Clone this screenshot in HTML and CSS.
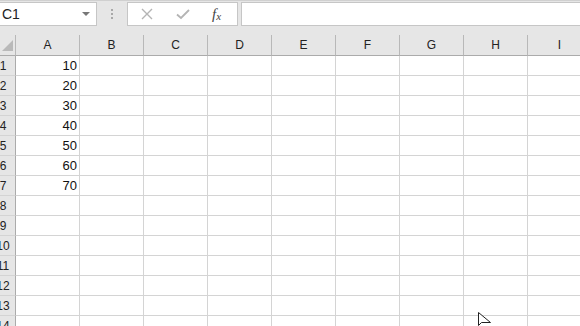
FILE: index.html
```html
<!DOCTYPE html>
<html lang="en">
<head>
  <meta charset="UTF-8" />
  <title>Sheet1</title>
  <link rel="stylesheet" href="styles.css">
</head>
<body>
  <div class="toolbar">
    <div class="namebox">
      <span class="ref">C1</span>
      <span class="drop"></span>
    </div>
    <div class="grip"><i></i><i></i><i></i></div>
    <div class="fbtns">
      <svg class="ico" width="12" height="12" viewBox="0 0 12 12"><path d="M1 1 L11 11 M11 1 L1 11" stroke="#b4b4b4" stroke-width="1.4" fill="none"/></svg>
      <svg class="ico" width="14" height="12" viewBox="0 0 14 12"><path d="M1 6.5 L5 10 L13 2" stroke="#b4b4b4" stroke-width="1.8" fill="none"/></svg>
      <span class="fx">f<sub>x</sub></span>
    </div>
    <div class="formula"></div>
  </div>

  <div class="sheet" id="sheet"></div>

  <svg class="cursor" width="14" height="16" viewBox="0 0 14 16"><path d="M0.5 0.5 L0.5 13.5 L3.5 10.5 L12.5 10.5 Z" fill="#fff" stroke="#222" stroke-width="1"/></svg>

  <script>
    const cols = ['A', 'B', 'C', 'D', 'E', 'F', 'G', 'H', 'I'];
    const sheet = document.getElementById('sheet');

    let html = '<div class="corner"><span class="tri"></span></div>';
    cols.forEach(c => { html += `<div class="colhead">${c}</div>`; });

    for (let r = 1; r <= 14; r++) {
      html += `<div class="rowhead"><span>${r}</span></div>`;
      cols.forEach((c, i) => {
        const val = (i === 0 && r <= 7) ? r * 10 : '';
        html += `<div class="cell">${val}</div>`;
      });
    }
    sheet.innerHTML = html;
  </script>
</body>
</html>
```

FILE: styles.css
```css
body {
  margin: 0;
  overflow: hidden;
  width: 580px;
  height: 326px;
  background: #fff;
  font-family: "Liberation Sans", Arial, sans-serif;
}

.toolbar {
  height: 35px;
  box-sizing: border-box;
  padding-top: 1px;
  background: #e6e6e6;
  border-top: 1px solid #d0d0d0;
  display: flex;
  align-items: flex-start;
}

.namebox {
  width: 97px;
  height: 24px;
  box-sizing: border-box;
  background: #fff;
  border: 1px solid #c6c6c6;
  border-left: none;
  display: flex;
  align-items: center;
  justify-content: space-between;
  padding: 0 6px 0 2px;
}

.ref {
  font-size: 14px;
  color: #222;
}

.drop {
  width: 0;
  height: 0;
  border-left: 4px solid transparent;
  border-right: 4px solid transparent;
  border-top: 4px solid #777;
}

.grip {
  width: 30px;
  height: 24px;
  display: flex;
  flex-direction: column;
  align-items: center;
  justify-content: center;
  gap: 2px;
}

.grip i {
  width: 2px;
  height: 2px;
  background: #a8a8a8;
}

.fbtns {
  width: 111px;
  height: 24px;
  box-sizing: border-box;
  background: #fff;
  border: 1px solid #c6c6c6;
  display: flex;
  align-items: center;
  padding-left: 13px;
}

.fbtns .ico:first-child {
  margin-right: 23px;
}

.fx {
  margin-left: 22px;
  font-family: "Liberation Serif", "Times New Roman", serif;
  font-style: italic;
  font-size: 15px;
  color: #444;
}

.fx sub {
  font-size: 11px;
  vertical-align: -1px;
}

.formula {
  flex: 1;
  height: 24px;
  box-sizing: border-box;
  margin-left: 3px;
  background: #fff;
  border: 1px solid #c6c6c6;
  border-right: none;
}

.sheet {
  display: grid;
  grid-template-columns: 16px repeat(9, 64px);
  grid-template-rows: 21px;
  grid-auto-rows: 20px;
}

.corner, .colhead {
  background: #e6e6e6;
  border-right: 1px solid #b8b8b8;
  border-bottom: 1px solid #ababab;
  box-sizing: border-box;
}

.corner {
  position: relative;
}

.tri {
  position: absolute;
  right: 2px;
  bottom: 4px;
  width: 0;
  height: 0;
  border-left: 11px solid transparent;
  border-bottom: 11px solid #b9b9b9;
}

.colhead {
  font-size: 12px;
  color: #222;
  text-align: center;
  line-height: 21px;
}

.rowhead {
  background: #e6e6e6;
  border-right: 1px solid #ababab;
  border-bottom: 1px solid #d4d4d4;
  box-sizing: border-box;
  overflow: hidden;
  position: relative;
}

.rowhead span {
  position: absolute;
  left: -8px;
  width: 22px;
  text-align: center;
  font-size: 12px;
  line-height: 20px;
  color: #222;
}

.cell {
  border-right: 1px solid #d4d4d4;
  border-bottom: 1px solid #d4d4d4;
  box-sizing: border-box;
  font-size: 13px;
  line-height: 20px;
  text-align: right;
  padding-right: 2px;
  color: #111;
}

.cursor {
  position: absolute;
  left: 478px;
  top: 312px;
}
```
